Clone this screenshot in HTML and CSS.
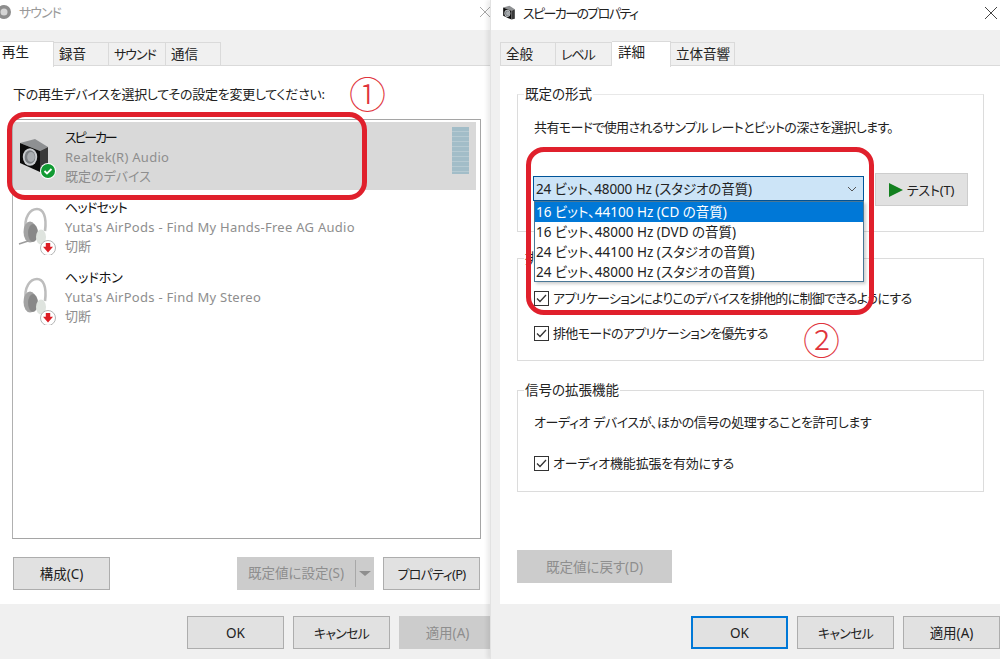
FILE: index.html
```html
<!DOCTYPE html>
<html lang="ja">
<head>
<meta charset="utf-8">
<title>サウンド</title>
<link rel="stylesheet" href="styles.css">
</head>
<body>
<svg class="defs" width="0" height="0" aria-hidden="true">
  <defs>
    <g id="cans">
      <path d="M8 26C5 9 13 2 19 2c6 0 10 7 8 22" fill="none" stroke="#bdbdbd" stroke-width="2.6"/>
      <ellipse cx="12" cy="25" rx="6.5" ry="10.5" fill="#a2a2a2"/>
      <ellipse cx="15" cy="26" rx="5" ry="9" fill="#888"/>
      <ellipse cx="23" cy="30" rx="5" ry="7.5" fill="#dfe4df"/>
      <circle cx="30" cy="41" r="7.5" fill="#fff" stroke="#b5b5b5"/>
      <path d="M27.8 36h4.4v3.8h2.8L30 45.5l-5-5.7h2.8z" fill="#dc1c24"/>
    </g>
    <g id="cube">
      <path d="M2 6 17 2l13 8-8 4z" fill="#8e9092"/>
      <path d="M2 6l20 8v21L2 26z" fill="#0c0c0c"/>
      <path d="M22 14l8-4v23l-8 2z" fill="#3a3a3a"/>
      <ellipse cx="12" cy="20" rx="7.2" ry="8.8" fill="#c9cccf"/>
      <ellipse cx="12" cy="20" rx="5.4" ry="6.8" fill="#7c8084"/>
      <ellipse cx="13" cy="20" rx="3.8" ry="5" fill="#a9adb0"/>
    </g>
  </defs>
</svg>
<main class="desk">
  <section class="win win-left">
    <header class="title title-left">
      <svg class="title-ico" width="14" height="16" viewBox="0 0 14 16"><circle cx="6" cy="8" r="7" fill="#8d8d8d"/><circle cx="6" cy="8" r="3.5" fill="#d5d5d5"/></svg>
      <span class="title-text muted ls-10">サウンド</span>
      <svg class="close" width="12" height="12" viewBox="0 0 12 12"><path d="M1 1l10 10M11 1 1 11" stroke="#a8a8a8" fill="none"/></svg>
    </header>
    <nav class="tabs">
      <span class="tab tab-active t54 tab-first">再生</span>
      <span class="tab t55">録音</span>
      <span class="tab t57 ls-10">サウンド</span>
      <span class="tab t55">通信</span>
    </nav>
    <div class="panel panel-left">
      <p class="line ls-26">下の再生デバイスを選択してその設定を変更してください:</p>
      <div class="list">
        <div class="row row-sel">
          <svg class="dev-ico" width="40" height="48" viewBox="0 0 40 48">
            <use href="#cube"/>
            <circle cx="30" cy="34" r="8" fill="#fff"/>
            <circle cx="30" cy="34" r="7" fill="#119a33"/>
            <path d="M26.5 34l2.5 2.5 4.5-4.5" fill="none" stroke="#fff" stroke-width="1.8"/>
          </svg>
          <div class="dev-text">
            <div class="dev-name ls-20">スピーカー</div>
            <div class="dev-sub latin">Realtek(R) Audio</div>
            <div class="dev-sub">既定のデバイス</div>
          </div>
          <div class="meter"></div>
        </div>
        <div class="row">
          <svg class="dev-ico" width="40" height="48" viewBox="0 0 40 48">
            <use href="#cans"/>
            <path d="M1 37l9-3" stroke="#9c9c9c" stroke-width="1.4"/>
          </svg>
          <div class="dev-text">
            <div class="dev-name ls-07">ヘッドセット</div>
            <div class="dev-sub latin">Yuta's AirPods - Find My Hands-Free AG Audio</div>
            <div class="dev-sub">切断</div>
          </div>
        </div>
        <div class="row">
          <svg class="dev-ico" width="40" height="48" viewBox="0 0 40 48"><use href="#cans"/></svg>
          <div class="dev-text">
            <div class="dev-name">ヘッドホン</div>
            <div class="dev-sub latin">Yuta's AirPods - Find My Stereo</div>
            <div class="dev-sub">切断</div>
          </div>
        </div>
      </div>
      <div class="btn-row">
        <span class="btn w97">構成(C)</span>
        <span class="split">
          <span class="split-main">既定値に設定(S)</span>
          <span class="split-arrow"></span>
        </span>
        <span class="btn w97 ls-07">プロパティ(P)</span>
      </div>
    </div>
    <footer class="foot foot-left">
      <span class="btn w97">OK</span>
      <span class="btn w97 ls-08">キャンセル</span>
      <span class="btn btn-off w97">適用(A)</span>
    </footer>
  </section>

  <section class="win win-right">
    <header class="title title-right">
      <svg class="title-ico" width="14" height="15" viewBox="0 0 32 36"><use href="#cube"/></svg>
      <span class="title-text ls-16">スピーカーのプロパティ</span>
      <svg class="close" width="14" height="14" viewBox="0 0 14 14"><path d="M1 1l12 12M13 1 1 13" stroke="#444" fill="none"/></svg>
    </header>
    <nav class="tabs tabs-right">
      <span class="tab t56">全般</span>
      <span class="tab t56 ls-10">レベル</span>
      <span class="tab tab-active t59">詳細</span>
      <span class="tab t64">立体音響</span>
    </nav>
    <div class="panel panel-right">
      <div class="group g1">
        <span class="legend">既定の形式</span>
        <p class="line ls-62">共有モードで使用されるサンプル レートとビットの深さを選択します。</p>
        <div class="combo-row">
          <div class="combo">
            <span class="opt-text">24 ビット、48000 Hz (スタジオの音質)</span>
            <svg width="10" height="6" viewBox="0 0 10 6"><path d="M1 1l4 4 4-4" fill="none" stroke="#555"/></svg>
            <ul class="drop">
              <li class="opt opt-on">16 ビット、44100 Hz (CD の音質)</li>
              <li class="opt">16 ビット、48000 Hz (DVD の音質)</li>
              <li class="opt">24 ビット、44100 Hz (スタジオの音質)</li>
              <li class="opt">24 ビット、48000 Hz (スタジオの音質)</li>
            </ul>
          </div>
          <span class="btn btn-test"><svg width="14" height="14" viewBox="0 0 14 14"><path d="M0 0l14 7-14 7z" fill="#13801f"/></svg><span class="ls-02">テスト(T)</span></span>
        </div>
      </div>
      <div class="group g2">
        <span class="legend">排他モード</span>
        <label class="check ls-69"><span class="box"><svg width="13" height="13" viewBox="0 0 13 13"><path d="M2 6.5l3 3 6-6.5" fill="none" stroke="#333" stroke-width="1.3"/></svg></span>アプリケーションによりこのデバイスを排他的に制御できるようにする</label>
        <label class="check ls-69"><span class="box"><svg width="13" height="13" viewBox="0 0 13 13"><path d="M2 6.5l3 3 6-6.5" fill="none" stroke="#333" stroke-width="1.3"/></svg></span>排他モードのアプリケーションを優先する</label>
      </div>
      <div class="group g3">
        <span class="legend">信号の拡張機能</span>
        <p class="line ls-39">オーディオ デバイスが、ほかの信号の処理することを許可します</p>
        <label class="check ls-02"><span class="box"><svg width="13" height="13" viewBox="0 0 13 13"><path d="M2 6.5l3 3 6-6.5" fill="none" stroke="#333" stroke-width="1.3"/></svg></span>オーディオ機能拡張を有効にする</label>
      </div>
      <span class="btn btn-off btn-reset">既定値に戻す(D)</span>
    </div>
    <footer class="foot foot-right">
      <span class="btn btn-focus w97">OK</span>
      <span class="btn w97 ls-08">キャンセル</span>
      <span class="btn w97">適用(A)</span>
    </footer>
  </section>

  <div class="mark mark-1"></div>
  <div class="mark mark-2"></div>
  <span class="num num-1">①</span>
  <span class="num num-2">②</span>
</main>
</body>
</html>
```

FILE: styles.css
```css
* { box-sizing: border-box; }
html, body { margin: 0; padding: 0; background: #fff; }
body {
  font-family: "Noto Sans", "Noto Sans CJK JP", sans-serif;
  font-size: 13.5px;
  line-height: 20px;
  color: #222;
  font-feature-settings: "palt";
}
.defs { position: absolute; }
.desk { position: relative; width: 1000px; height: 659px; overflow: hidden; }

.ls-02, .ls-07, .ls-08, .ls-10, .ls-16, .ls-20, .ls-26, .ls-39, .ls-62, .ls-69 { font-size: 13px; }
.ls-02 { letter-spacing: -.2px; }
.ls-07 { letter-spacing: -.7px; }
.ls-08 { letter-spacing: -.8px; }
.ls-10 { letter-spacing: -1px; }
.ls-16 { letter-spacing: -1.6px; }
.ls-20 { letter-spacing: -2.2px; }
.ls-26 { letter-spacing: -.26px; }
.ls-39 { letter-spacing: -.39px; }
.ls-62 { letter-spacing: -.62px; }
.ls-69 { letter-spacing: -.69px; }

.win { position: absolute; top: 0; height: 659px; display: flex; flex-direction: column; background: #f0f0f0; overflow: hidden; }
.win-left { left: 0; width: 490px; }
.win-right { left: 490px; width: 510px; border-left: 1px solid #e2e2e2; box-shadow: -3px 0 4px rgba(0,0,0,.08); }

.title { height: 30px; flex: none; padding-bottom: 5px; background: #fff; display: flex; align-items: center; }
.title-left { margin-left: -2px; padding-bottom: 6px; }
.title-right { padding-left: 11px; }
.title-text { margin-left: 7px; }
.muted { color: #999; }
.close { margin-left: auto; }
.title-left .close { margin-right: -1px; }
.title-right .close { margin-right: 2px; }

.tabs { height: 35px; flex: none; padding-top: 11px; display: flex; align-items: flex-start; }
.tabs-right { padding-left: 9px; }
.tab { height: 24px; margin-top: 1px; padding-left: 5px; background: #f0f0f0; border: 1px solid #dadada; border-bottom: 0; border-left: 0; line-height: 22px; white-space: nowrap; }
.tab-active { position: relative; z-index: 1; height: 26px; margin-top: 0; background: #fff; line-height: 21px; padding-left: 6px; }
.tab-first { padding-left: 2px; }
.tabs-right .tab:first-child { border-left: 1px solid #dadada; }
.t54 { width: 54px; }
.t55 { width: 55px; }
.t56 { width: 56px; }
.t57 { width: 57px; }
.t59 { width: 59px; }
.t64 { width: 64px; }

.panel { height: 539px; flex: none; background: #fff; border-top: 1px solid #dadada; }
.panel-left { padding: 18px 0 0 12px; }
.panel-right { margin-left: 9px; padding: 28px 0 0 17px; }

.line { margin: 0; line-height: 20px; }
.panel-left > .line { padding-left: 1px; }

.list { width: 469px; height: 420px; margin-top: 15px; padding-top: 2px; border: 1px solid #a5a5a5; border-left-color: #b0b0b0; }
.row { height: 70px; padding: 7px 0 0 5px; display: flex; position: relative; }
.row-sel { height: 68px; width: 463px; padding-top: 5px; background: #d9d9d9; }
.dev-ico { flex: none; margin-top: 10px; }
.dev-text { margin: 1px 0 0 7px; line-height: 19.5px; font-size: 13px; }
.dev-name { color: #111; }
.dev-sub { color: #8e8e8e; }
.latin { letter-spacing: .27px; }
.meter {
  position: absolute; left: 439px; top: 5px; width: 17px; height: 47px;
  background: repeating-linear-gradient(#a2bdc8 0 4px, #b6cad2 4px 5px);
}

.btn, .split { display: inline-flex; flex: none; align-items: center; justify-content: center; height: 33px; }
.btn { background: #e1e1e1; border: 1px solid #adadad; }
.w97 { width: 97px; }
.btn-off { background: #cccccc; border-color: #cccccc; color: #8e8e8e; }
.btn-focus { border: 2px solid #0078d7; }

.btn-row { display: flex; width: 467px; margin: 18px 0 0 1px; }
.split { width: 137px; margin-left: auto; margin-right: 9px; background: #cccccc; color: #8e8e8e; }
.split-main { flex: 1; text-align: center; height: 27px; line-height: 27px; border-right: 1px solid #a8a8a8; }
.split-arrow { width: 18px; display: flex; justify-content: center; }
.split-arrow::before { content: ""; border: 5px solid transparent; border-top: 5px solid #8e8e8e; margin-top: 5px; border-left-width: 6px; border-right-width: 6px; }

.foot { height: 55px; flex: none; padding-top: 12px; display: flex; gap: 9px; }
.foot-left { padding-left: 187px; }
.foot-right { padding-left: 200px; }

.group { position: relative; width: 467px; border: 1px solid #dcdcdc; padding-left: 16px; }
.legend { position: absolute; left: 6px; top: -11px; padding: 0 1px; background: #fff; }
.g1 { height: 138px; padding-top: 22px; border-top-color: #e8e8e8; }
.g2 { height: 103px; margin-top: 26px; padding-top: 29px; }
.g3 { height: 102px; margin-top: 29px; padding-top: 21px; }

.combo-row { display: flex; align-items: flex-start; margin: 39px 0 0 -1px; }
.combo { position: relative; width: 331px; height: 25px; padding: 0 6px 0 2px; display: flex; align-items: center; justify-content: space-between; background: #cce4f7; border: 1px solid #005499; }
.opt-text { letter-spacing: -.1px; }
.drop { position: absolute; z-index: 3; left: 0; top: 24px; width: 330px; height: 81px; margin: 0; padding: 0; list-style: none; background: #fff; border: 1px solid #4a7796; box-shadow: 2px 2px 3px rgba(0,0,0,.2); }
.opt { height: 20px; padding-left: 1px; }
.opt-on { background: #0078d7; color: #fff; }
.btn-test { width: 93px; margin: -3px 0 0 11px; gap: 4px; border-color: #cdcdcd; background: #e1e1e1; }

.check { display: flex; align-items: center; height: 20px; }
.check + .check { margin-top: 15px; }
.line + .check { margin-top: 21px; }
.box { flex: none; width: 15px; height: 15px; margin-right: 4px; border: 1px solid #333; background: #fff; display: flex; align-items: center; justify-content: center; }

.btn-reset { display: flex; width: 155px; margin-top: 58px; }

.mark { position: absolute; z-index: 5; border: 5px solid #e0202c; border-radius: 18px; pointer-events: none; }
.mark-1 { left: 7px; top: 112px; width: 360px; height: 88px; }
.mark-2 { left: 526px; top: 147px; width: 348px; height: 168px; }
.num { position: absolute; z-index: 6; color: #e0343c; font-family: "Noto Sans CJK JP", sans-serif; font-size: 37px; font-weight: 300; line-height: 40px; font-feature-settings: normal; }
.num-1 { left: 349px; top: 73px; }
.num-2 { left: 803px; top: 319px; }
```
